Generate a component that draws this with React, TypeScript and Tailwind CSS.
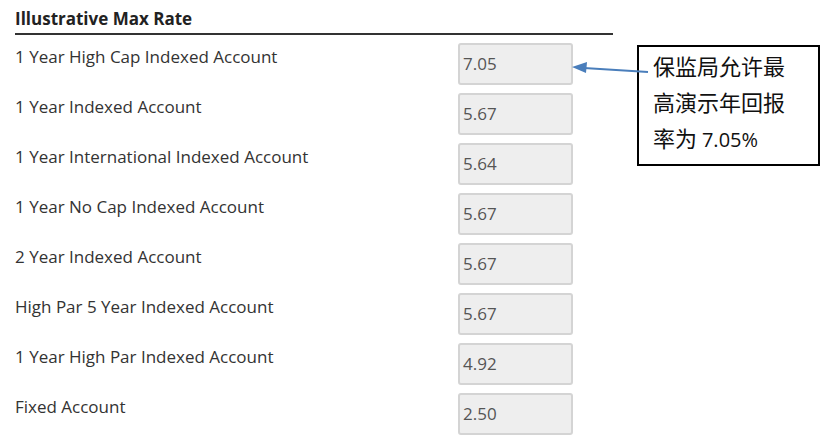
import React from "react";

const rates = [
  { label: "1 Year High Cap Indexed Account", value: "7.05" },
  { label: "1 Year Indexed Account", value: "5.67" },
  { label: "1 Year International Indexed Account", value: "5.64" },
  { label: "1 Year No Cap Indexed Account", value: "5.67" },
  { label: "2 Year Indexed Account", value: "5.67" },
  { label: "High Par 5 Year Indexed Account", value: "5.67" },
  { label: "1 Year High Par Indexed Account", value: "4.92" },
  { label: "Fixed Account", value: "2.50" },
];

export default function App() {
  return (
    <div
      className="relative w-[835px] h-[442px] overflow-hidden bg-white text-[#333]"
      style={{ fontFamily: '"Open Sans", "Noto Sans", sans-serif' }}
    >
      <div className="pl-[15px] pt-[8px] w-[613px]">
        <div className="text-[17px] leading-[22px] font-bold text-[#222] pb-[3px] border-b-2 border-[#333]">
          Illustrative Max Rate
        </div>
        <div className="pt-[8px]">
          {rates.map((r) => (
            <div key={r.label} className="flex h-[50px]">
              <div className="w-[443px] pt-[3px] text-[17px] leading-[22px] text-[#333]">{r.label}</div>
              <div className="w-[115px] h-[42px] flex items-center pl-[3px] rounded-[3px] border-2 border-[#d4d4d4] bg-[#eeeeee] text-[17px] text-[#555]">
                {r.value}
              </div>
            </div>
          ))}
        </div>
      </div>

      {/* callout */}
      <div
        className="absolute left-[637px] top-[45px] w-[183px] h-[121px] border-2 border-black bg-white pl-[14px] text-[22px] leading-[36px] text-[#111]"
        style={{ fontFamily: '"Noto Sans CJK SC", "Noto Sans", sans-serif' }}
      >
        <div>保监局允许最</div>
        <div>高演示年回报</div>
        <div>
          率为 <span style={{ fontFamily: '"Open Sans", sans-serif' }} className="text-[20px]">7.05%</span>
        </div>
      </div>

      {/* arrow */}
      <svg className="absolute left-0 top-0" width="835" height="442">
        <line x1="648" y1="72" x2="584" y2="68" stroke="#4a7ebb" strokeWidth="2" />
        <polygon points="572,67 587,62 586,73" fill="#4a7ebb" />
      </svg>
    </div>
  );
}
